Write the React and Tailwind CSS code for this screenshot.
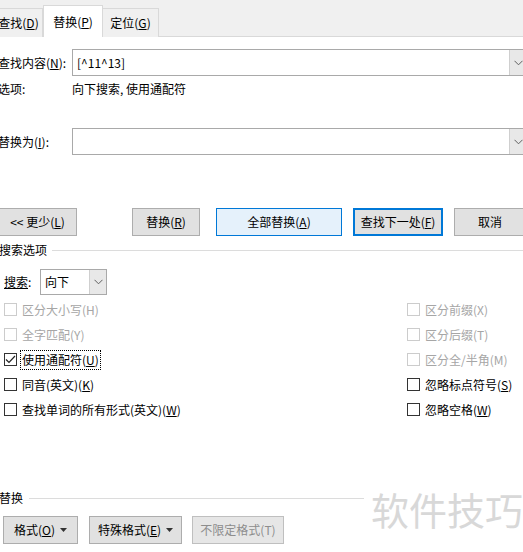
import React from 'react';

// Word "查找和替换" dialog, 替换 tab with options expanded

const Chevron = () => (
  <svg width="9" height="6" viewBox="0 0 9 6" fill="none" stroke="#606060" strokeWidth="1">
    <path d="M0.5 0.8L4.5 4.8L8.5 0.8" />
  </svg>
);

const Caret = () => (
  <svg width="7" height="4" viewBox="0 0 7 4" className="ml-[5px]">
    <path d="M0 0H7L3.5 4Z" fill="#333" />
  </svg>
);

function Combo({ value, width }) {
  return (
    <div className={`flex h-[27px] ${width} border border-[#a9a9a9] bg-white`}>
      <div className="flex flex-1 items-center pl-[4px] text-[12px] text-black">{value}</div>
      <div className="flex w-[17px] items-center justify-center border-l border-[#cfcfcf] bg-[#e8e8e8]">
        <Chevron />
      </div>
    </div>
  );
}

function Btn({ children, className = '', variant = 'normal' }) {
  const styles = {
    normal: 'border border-[#adadad] bg-[#e1e1e1] text-black',
    hover: 'border border-[#0078d7] bg-[#e5f1fb] text-black',
    primary: 'border-2 border-[#0078d7] bg-[#e1e1e1] text-black',
    disabled: 'border border-[#bfbfbf] bg-[#e6e6e6] text-[#8d8d8d]',
  };
  return (
    <div className={`flex h-[28px] items-center justify-center text-[12px] ${styles[variant]} ${className}`}>
      {children}
    </div>
  );
}

function Check({ label, checked, disabled, focused }) {
  return (
    <div className="flex h-[25px] items-center">
      <div
        className={`flex h-[13px] w-[13px] items-center justify-center border bg-white ${
          disabled ? 'border-[#cccccc]' : 'border-[#333333]'
        }`}
      >
        {checked && (
          <svg width="11" height="9" viewBox="0 0 11 9" fill="none" stroke="#222" strokeWidth="1.2">
            <path d="M1 4.5L4 7.5L10 1" />
          </svg>
        )}
      </div>
      <span
        className={`ml-[3px] px-[1px] text-[12px] leading-[18px] ${
          disabled ? 'text-[#a6a6a6]' : 'text-black'
        } ${focused ? 'border border-dotted border-black' : 'border border-transparent'}`}
      >
        {label}
      </span>
    </div>
  );
}

export default function App() {
  return (
    <div className="relative h-[552px] w-[523px] overflow-hidden bg-white font-['Noto_Sans_CJK_SC','Microsoft_YaHei',sans-serif] text-[12px] text-black">
      {/* Tabs */}
      <div className="flex h-[37px] items-end border-b border-[#d9d9d9] bg-[#f0f0f0]">
        <div className="-ml-[6px] mb-[-1px] flex h-[29px] w-[49px] items-center justify-center border border-b-0 border-[#d9d9d9] bg-[#f0f0f0]">
          查找(<u>D</u>)
        </div>
        <div className="mb-[-1px] flex h-[32px] w-[60px] items-center justify-center border border-b-0 border-[#d9d9d9] bg-white">
          替换(<u>P</u>)
        </div>
        <div className="mb-[-1px] flex h-[29px] w-[56px] items-center justify-center border border-b-0 border-l-0 border-[#d9d9d9] bg-[#f0f0f0]">
          定位(<u>G</u>)
        </div>
      </div>

      <div className="-ml-[2px] w-[540px]">
        {/* Find what */}
        <div className="mt-[12px] flex items-center">
          <div className="w-[74px]">查找内容(<u>N</u>):</div>
          <Combo value="[^11^13]" width="w-[455px]" />
        </div>
        <div className="mt-[5px] flex h-[16px] items-center">
          <div className="w-[74px]">选项:</div>
          <div>向下搜索, 使用通配符</div>
        </div>

        {/* Replace with */}
        <div className="mt-[31px] flex items-center">
          <div className="w-[74px]">替换为(<u>I</u>):</div>
          <Combo value="" width="w-[455px]" />
        </div>

        {/* Buttons */}
        <div className="mt-[53px] flex">
          <Btn className="w-[79px]">&lt;&lt; 更少(<u>L</u>)</Btn>
          <Btn className="ml-[55px] w-[68px]">替换(<u>R</u>)</Btn>
          <Btn className="ml-[16px] w-[126px]" variant="hover">全部替换(<u>A</u>)</Btn>
          <Btn className="ml-[11px] w-[90px]" variant="primary">查找下一处(<u>F</u>)</Btn>
          <Btn className="ml-[11px] w-[72px]">取消</Btn>
        </div>
      </div>

      {/* Search options */}
      <div className="mt-[6px] flex h-[16px] items-center">
        <span className="-ml-[1px]">搜索选项</span>
        <div className="ml-[5px] h-px flex-1 bg-[#dcdcdc]" />
      </div>

      <div className="pl-[4px]">
        <div className="mt-[11px] flex items-center">
          <div className="w-[36px]">
            <u>搜索</u>:
          </div>
          <div className="flex h-[26px] w-[67px] border border-[#a9a9a9] bg-white">
            <div className="flex flex-1 items-center pl-[4px]">向下</div>
            <div className="flex w-[17px] items-center justify-center border-l border-[#cfcfcf] bg-[#e8e8e8]">
              <Chevron />
            </div>
          </div>
        </div>

        <div className="mt-[2px] flex">
          <div className="w-[403px]">
            <Check label="区分大小写(H)" disabled />
            <Check label="全字匹配(Y)" disabled />
            <Check label={<>使用通配符(<u>U</u>)</>} checked focused />
            <Check label={<>同音(英文)(<u>K</u>)</>} />
            <Check label={<>查找单词的所有形式(英文)(<u>W</u>)</>} />
          </div>
          <div>
            <Check label="区分前缀(X)" disabled />
            <Check label="区分后缀(T)" disabled />
            <Check label="区分全/半角(M)" disabled />
            <Check label={<>忽略标点符号(<u>S</u>)</>} />
            <Check label={<>忽略空格(<u>W</u>)</>} />
          </div>
        </div>
      </div>

      {/* Replace section */}
      <div className="mt-[68px] flex h-[16px] w-[364px] items-center">
        <span className="-ml-[1px]">替换</span>
        <div className="ml-[6px] h-px flex-1 bg-[#dcdcdc]" />
      </div>
      <div className="mt-[10px] flex pl-[3px]">
        <Btn className="w-[75px]">
          格式(<u>O</u>)
          <Caret />
        </Btn>
        <Btn className="ml-[11px] w-[93px]">
          特殊格式(<u>E</u>)
          <Caret />
        </Btn>
        <Btn className="ml-[10px] w-[92px]" variant="disabled">不限定格式(T)</Btn>
      </div>

      {/* Watermark */}
      <div className="pointer-events-none absolute left-[371px] top-[484px] text-[38px] leading-[50px] text-[#d8d8d8]">
        软件技巧
      </div>
    </div>
  );
}
